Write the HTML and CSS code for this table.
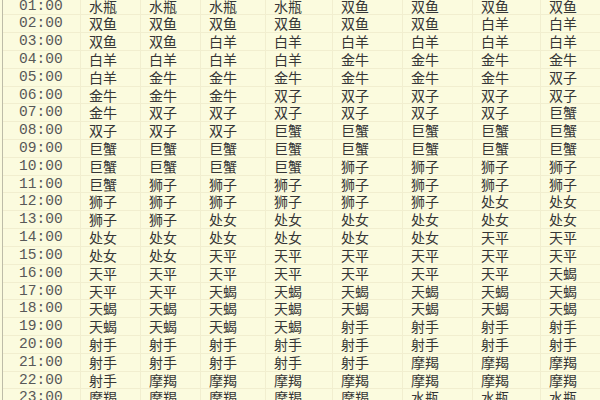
FILE: index.html
```html
<!DOCTYPE html>
<html lang="zh">
<head>
<meta charset="utf-8">
<link rel="stylesheet" href="styles.css">
</head>
<body>
<div class="sheet">
<div class="row"><span class="t">01:00</span><span>水瓶</span><span>水瓶</span><span>水瓶</span><span>水瓶</span><span>双鱼</span><span>双鱼</span><span>双鱼</span><span>双鱼</span></div>
<div class="row"><span class="t">02:00</span><span>双鱼</span><span>双鱼</span><span>双鱼</span><span>双鱼</span><span>双鱼</span><span>双鱼</span><span>白羊</span><span>白羊</span></div>
<div class="row"><span class="t">03:00</span><span>双鱼</span><span>双鱼</span><span>白羊</span><span>白羊</span><span>白羊</span><span>白羊</span><span>白羊</span><span>白羊</span></div>
<div class="row"><span class="t">04:00</span><span>白羊</span><span>白羊</span><span>白羊</span><span>白羊</span><span>金牛</span><span>金牛</span><span>金牛</span><span>金牛</span></div>
<div class="row"><span class="t">05:00</span><span>白羊</span><span>金牛</span><span>金牛</span><span>金牛</span><span>金牛</span><span>金牛</span><span>金牛</span><span>双子</span></div>
<div class="row"><span class="t">06:00</span><span>金牛</span><span>金牛</span><span>金牛</span><span>双子</span><span>双子</span><span>双子</span><span>双子</span><span>双子</span></div>
<div class="row"><span class="t">07:00</span><span>金牛</span><span>双子</span><span>双子</span><span>双子</span><span>双子</span><span>双子</span><span>双子</span><span>巨蟹</span></div>
<div class="row"><span class="t">08:00</span><span>双子</span><span>双子</span><span>双子</span><span>巨蟹</span><span>巨蟹</span><span>巨蟹</span><span>巨蟹</span><span>巨蟹</span></div>
<div class="row"><span class="t">09:00</span><span>巨蟹</span><span>巨蟹</span><span>巨蟹</span><span>巨蟹</span><span>巨蟹</span><span>巨蟹</span><span>巨蟹</span><span>巨蟹</span></div>
<div class="row"><span class="t">10:00</span><span>巨蟹</span><span>巨蟹</span><span>巨蟹</span><span>巨蟹</span><span>狮子</span><span>狮子</span><span>狮子</span><span>狮子</span></div>
<div class="row"><span class="t">11:00</span><span>巨蟹</span><span>狮子</span><span>狮子</span><span>狮子</span><span>狮子</span><span>狮子</span><span>狮子</span><span>狮子</span></div>
<div class="row"><span class="t">12:00</span><span>狮子</span><span>狮子</span><span>狮子</span><span>狮子</span><span>狮子</span><span>狮子</span><span>处女</span><span>处女</span></div>
<div class="row"><span class="t">13:00</span><span>狮子</span><span>狮子</span><span>处女</span><span>处女</span><span>处女</span><span>处女</span><span>处女</span><span>处女</span></div>
<div class="row"><span class="t">14:00</span><span>处女</span><span>处女</span><span>处女</span><span>处女</span><span>处女</span><span>处女</span><span>天平</span><span>天平</span></div>
<div class="row"><span class="t">15:00</span><span>处女</span><span>处女</span><span>天平</span><span>天平</span><span>天平</span><span>天平</span><span>天平</span><span>天平</span></div>
<div class="row"><span class="t">16:00</span><span>天平</span><span>天平</span><span>天平</span><span>天平</span><span>天平</span><span>天平</span><span>天平</span><span>天蝎</span></div>
<div class="row"><span class="t">17:00</span><span>天平</span><span>天平</span><span>天蝎</span><span>天蝎</span><span>天蝎</span><span>天蝎</span><span>天蝎</span><span>天蝎</span></div>
<div class="row"><span class="t">18:00</span><span>天蝎</span><span>天蝎</span><span>天蝎</span><span>天蝎</span><span>天蝎</span><span>天蝎</span><span>天蝎</span><span>天蝎</span></div>
<div class="row"><span class="t">19:00</span><span>天蝎</span><span>天蝎</span><span>天蝎</span><span>天蝎</span><span>射手</span><span>射手</span><span>射手</span><span>射手</span></div>
<div class="row"><span class="t">20:00</span><span>射手</span><span>射手</span><span>射手</span><span>射手</span><span>射手</span><span>射手</span><span>射手</span><span>射手</span></div>
<div class="row"><span class="t">21:00</span><span>射手</span><span>射手</span><span>射手</span><span>射手</span><span>射手</span><span>摩羯</span><span>摩羯</span><span>摩羯</span></div>
<div class="row"><span class="t">22:00</span><span>射手</span><span>摩羯</span><span>摩羯</span><span>摩羯</span><span>摩羯</span><span>摩羯</span><span>摩羯</span><span>摩羯</span></div>
<div class="row"><span class="t">23:00</span><span>摩羯</span><span>摩羯</span><span>摩羯</span><span>摩羯</span><span>摩羯</span><span>水瓶</span><span>水瓶</span><span>水瓶</span></div>
</div>
</body>
</html>
```
FILE: styles.css
```css
html, body {
  margin: 0;
  padding: 0;
  background: #fbfbde;
  overflow: hidden;
}

.sheet {
  margin-top: -2.5px;
  width: 600px;
  border-left: 1px solid #bdbca8;
  margin-left: 2px;
  box-sizing: border-box;
}

.row {
  display: grid;
  grid-template-columns: 78px 60px 60px 65px 67px 70px 70px 68px 60px;
  height: 17.82px;
  box-sizing: border-box;
  border-bottom: 1px solid #f1eecf;
}

.row span {
  display: block;
  padding-left: 8px;
  border-right: 1px solid #f1eecf;
  font-family: "Noto Sans CJK SC", sans-serif;
  font-size: 14px;
  line-height: 16.8px;
  color: #363636;
  white-space: nowrap;
  box-sizing: border-box;
}

.row span.t {
  padding-left: 16px;
  font-family: "Liberation Mono", monospace;
  font-size: 14.6px;
  color: #585858;
}
```
